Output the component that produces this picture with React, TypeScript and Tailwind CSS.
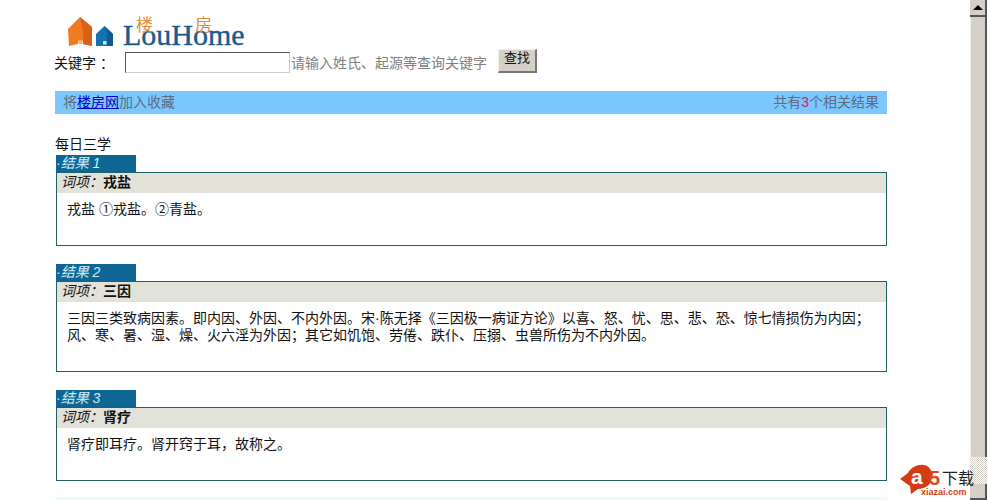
const cjk = "font-['Liberation_Sans','Noto_Sans_CJK_SC',sans-serif]";

const results = [
  {
    no: 1,
    term: "戎盐",
    lines: ["戎盐 ①戎盐。②青盐。"],
    body: "h-[52px]",
    gap: "mb-[18px]",
  },
  {
    no: 2,
    term: "三因",
    lines: [
      "三因三类致病因素。即内因、外因、不内外因。宋·陈无择《三因极一病证方论》以喜、怒、忧、思、悲、恐、惊七情损伤为内因；",
      "风、寒、暑、湿、燥、火六淫为外因；其它如饥饱、劳倦、跌仆、压搦、虫兽所伤为不内外因。",
    ],
    body: "h-[69px]",
    gap: "mb-[18px]",
  },
  {
    no: 3,
    term: "肾疗",
    lines: ["肾疗即耳疗。肾开窍于耳，故称之。"],
    body: "h-[52px]",
    gap: "mb-[16px]",
  },
];

const Logo = () => (
  <div className="relative h-[50px] pl-[13px] flex items-end">
    <svg width="46" height="30" viewBox="0 0 46 30" className="mb-[3px]">
      <path d="M0 12 L12 0 L24 10 L24 29 L15 27 L15 24 L10 24 L10 27 L1 29 Z" fill="#f07a20" />
      <path d="M12 0 L24 10 L24 29 L15 27 L15 14 Z" fill="#d9601a" />
      <rect x="10.5" y="23" width="4" height="4" fill="#f5b070" />
      <path d="M28 17 L36.5 9 L45 17 L45 29 L28 29 Z" fill="#1273b0" />
      <path d="M36.5 9 L45 17 L45 29 L39 29 L39 16 Z" fill="#0d5b90" />
      <rect x="35" y="24" width="3.5" height="3.5" fill="#cfe6f5" />
    </svg>
    <span className="ml-[9px] text-[30px] leading-[30px] text-[#1c5a8c] [-webkit-text-stroke:0.4px_#1c5a8c] font-['Liberation_Serif',serif]">
      LouHome
    </span>
    <span className="absolute left-[81px] top-[17px] text-[17px] leading-[18px] text-[#e08a3c]">楼</span>
    <span className="absolute left-[140px] top-[17px] text-[17px] leading-[18px] text-[#e08a3c]">房</span>
  </div>
);

const SearchRow = () => (
  <div className="flex items-start h-[41px] text-[14px] leading-[16px]">
    <span className="w-[71px] mt-[5px] -ml-px text-[#111] whitespace-pre">关键字 ：</span>
    <input
      className="w-[165px] h-[21px] mt-[2px] bg-white border border-t-[#555] border-l-[#555] border-r-[#ccc] border-b-[#ccc]"
      aria-label="关键字"
    />
    <span className="ml-px mt-[5px] w-[207px] text-[#808080]">请输入姓氏、起源等查询关键字</span>
    <button className="w-[39px] h-[24px] -mt-px pb-[5px] bg-[#d4d0c8] text-[13px] text-[#111] border-t border-l border-t-[#f4f2ee] border-l-[#f4f2ee] border-r-2 border-b-2 border-r-[#777] border-b-[#777]">
      查找
    </button>
  </div>
);

const ResultCard = ({ r }: { r: (typeof results)[number] }) => (
  <section className={r.gap}>
    <div className="ml-px w-[80px] h-[17px] bg-[#0f6695] text-[#cdeefc] italic text-[14px] leading-[16px] whitespace-pre">
      ·结果 {r.no}
    </div>
    <div className="ml-px border border-[#1f5f6b] bg-white">
      <div className="h-[20px] bg-[#e2e2d8] pl-[4px] text-[14px] leading-[18px] text-[#111]">
        <span className="italic">词项：</span>
        <b>{r.term}</b>
      </div>
      <div className={`${r.body} px-[10px] pt-[8px] text-[14px] leading-[17px] text-[#111]`}>
        {r.lines.map((l) => (
          <p key={l} className="whitespace-nowrap">{l}</p>
        ))}
      </div>
    </div>
  </section>
);

const Scrollbar = () => (
  <div className="w-[18px] h-[500px] flex flex-col shrink-0 bg-white">
    <div className="h-[17px] w-[17px] bg-[#d4d0c8] border-b-2 border-r-2 border-[#555] flex items-center justify-center">
      <div className="w-0 h-0 border-x-[5px] border-x-transparent border-b-[5px] border-b-black" />
    </div>
    <div className="h-[440px] w-[17px] bg-[#d4d0c8] border-l border-l-[#f4f2ee] border-r-2 border-r-[#555]" />
    <div className="flex-1 w-[17px] bg-[repeating-conic-gradient(#d4d0c8_0_25%,#fff_0_50%)] bg-[length:2px_2px]" />
    <div className="h-[16px] w-[17px] bg-[#d4d0c8] border-b-2 border-r-2 border-[#555]" />
  </div>
);

const Watermark = () => (
  <div className="absolute left-[897px] top-[462px] w-[72px] h-[38px] bg-white">
    <svg width="34" height="30" viewBox="0 0 34 30" className="absolute left-[3px] top-[2px]">
      <path d="M0 15 L8 9 C11 3 18 0 24 1 C30 2 33 8 32 14 C31 21 25 25 18 25 L11 30 L10 22 Z" fill="#d63c14" />
    </svg>
    <span className="absolute left-[14px] top-[3px] text-[21px] leading-[24px] font-bold text-white">a</span>
    <span className="absolute left-[32px] top-[7px] text-[20px] leading-[18px] font-bold text-[#e0481a]">5</span>
    <span className="absolute left-[45px] top-[10px] text-[16px] leading-[14px] text-[#222] whitespace-nowrap">下载</span>
    <span className="absolute left-[24px] top-[25px] text-[9px] leading-[10px] font-bold text-[#d63c14] whitespace-nowrap">xiazai.com</span>
  </div>
);

export default function App() {
  return (
    <div className={`relative flex h-[500px] w-[988px] overflow-hidden bg-white ${cjk}`}>
      <main className="w-[970px] shrink-0 pl-[55px]">
        <div className="w-[832px]">
          <Logo />
          <SearchRow />
          <div className="h-[23px] bg-[#7ac8ff] px-2 pb-px flex justify-between items-center text-[14px] text-[#5f6b80]">
            <span>
              将<a href="#" className="text-[#0000cc] underline">楼房网</a>加入收藏
            </span>
            <span>
              共有<span className="text-[#d02060]">3</span>个相关结果
            </span>
          </div>
          <div className="mt-[23px] mb-[3px] h-[15px] text-[14px] leading-[15px] text-[#111]">每日三学</div>
          {results.map((r) => (
            <ResultCard key={r.no} r={r} />
          ))}
          <div className="h-[6px] bg-[#eefafb]" />
        </div>
      </main>
      <Scrollbar />
      <Watermark />
    </div>
  );
}
